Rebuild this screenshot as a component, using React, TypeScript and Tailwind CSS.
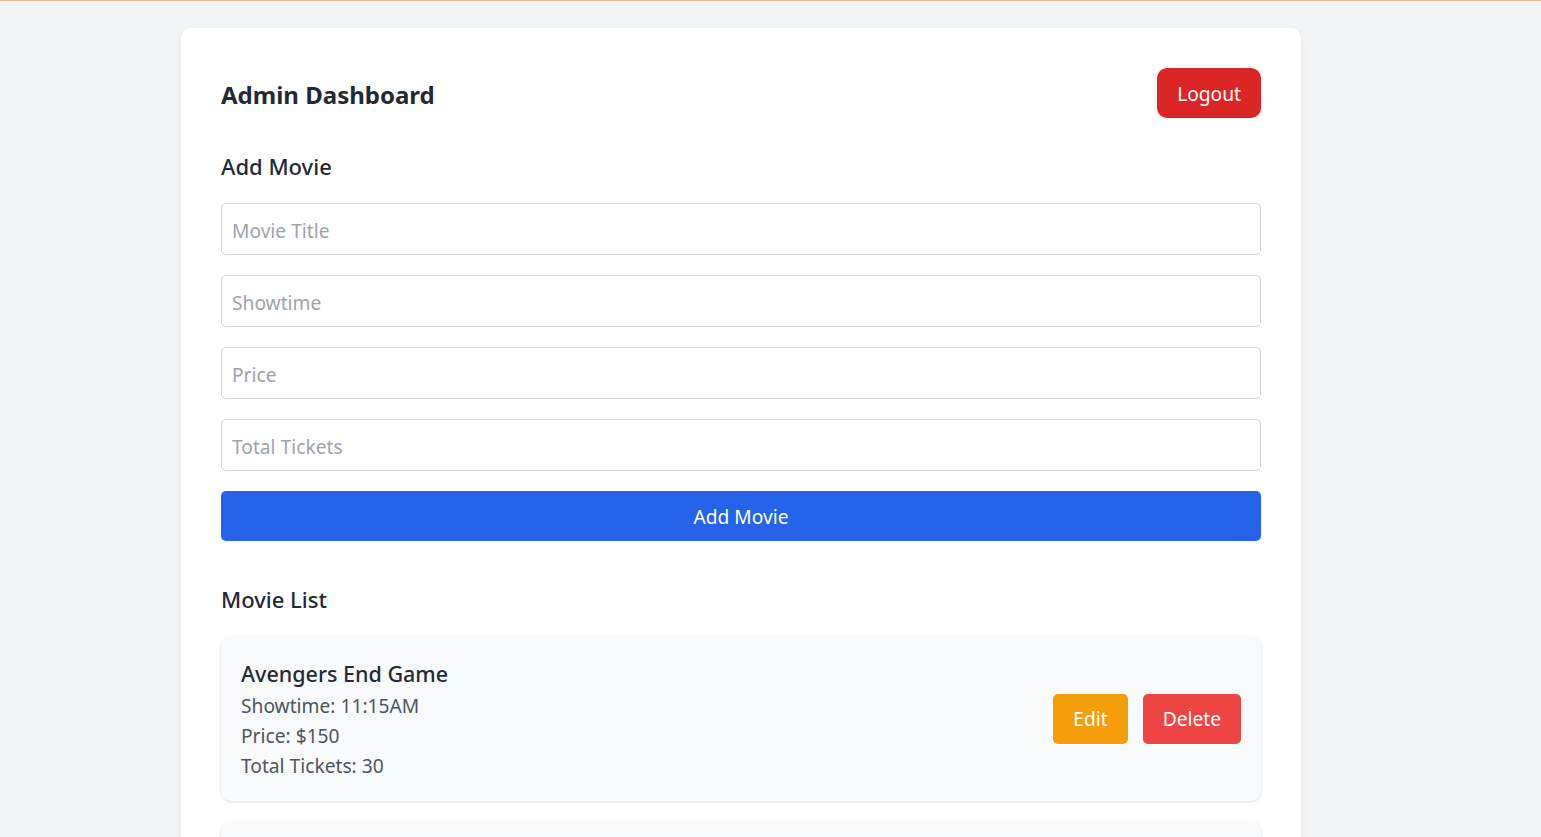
import { useState } from 'react'

type Movie = { title: string; showtime: string; price: string; total: string }

const MOVIES: Movie[] = [
  { title: 'Avengers End Game', showtime: '11:15AM', price: '150', total: '30' },
  { title: 'Inception', showtime: '02:30PM', price: '120', total: '40' },
]

const FIELDS = ['Movie Title', 'Showtime', 'Price', 'Total Tickets']

export default function App() {
  const [values, setValues] = useState<string[]>(['', '', '', ''])

  return (
    <div className="min-h-screen border-t border-[#d9b98f] bg-[#f3f4f6] pt-[27px] pb-10 font-['Segoe_UI','Noto_Sans',sans-serif]">
      <div className="ml-[181px] w-[1120px] rounded-[10px] bg-white p-10 shadow-[0_2px_6px_rgba(0,0,0,0.06)]">
        {/* Header */}
        <div className="mb-[30px] flex items-center justify-between">
          <h2 className="pt-[2px] text-[24px] font-bold leading-[35px] text-[#1f2937]">Admin Dashboard</h2>
          <button className="h-[50px] rounded-[10px] bg-[#dc2626] px-5 pt-[2px] text-[19.2px] text-white">Logout</button>
        </div>

        {/* Add movie form */}
        <h3 className="mb-5 pt-[1px] text-[22px] font-medium leading-[34px] text-[#1f2937]">Add Movie</h3>
        <div className="flex flex-col gap-5">
          {FIELDS.map((f, i) => (
            <input
              key={f}
              value={values[i]}
              onChange={e => setValues(v => v.map((x, j) => (j === i ? e.target.value : x)))}
              placeholder={f}
              className="h-[52px] w-full rounded-[5px] border border-[#d1d5db] px-[10px] pt-[2px] text-[19.2px] text-[#1f2937] outline-none placeholder:text-[#9ca3af]"
            />
          ))}
          <button className="h-[50px] w-full rounded-[5px] bg-[#2563eb] pt-[2px] text-[19.2px] text-white">Add Movie</button>
        </div>

        {/* Movie list */}
        <h3 className="mt-10 mb-5 pt-[1px] text-[22px] font-medium leading-[34px] text-[#1f2937]">Movie List</h3>
        <div className="flex flex-col gap-5">
          {MOVIES.map(m => (
            <div
              key={m.title}
              className="flex items-center justify-between rounded-[10px] bg-[#f9fafb] p-5 shadow-[0_1px_3px_rgba(0,0,0,0.12)]"
            >
              <div className="pt-[1px]">
                <p className="text-[21.5px] font-medium leading-[33px] text-[#1f2937]">{m.title}</p>
                <div className="pt-[1px]">
                  <p className="text-[19.2px] leading-[30px] text-[#4b5563]">Showtime: {m.showtime}</p>
                  <p className="text-[19.2px] leading-[30px] text-[#4b5563]">Price: ${m.price}</p>
                  <p className="text-[19.2px] leading-[30px] text-[#4b5563]">Total Tickets: {m.total}</p>
                </div>
              </div>
              <div className="flex gap-[15px]">
                <button className="h-[50px] rounded-[5px] bg-[#f59e0b] px-5 pt-[2px] text-[19.2px] text-white">Edit</button>
                <button className="h-[50px] rounded-[5px] bg-[#ef4444] px-5 pt-[2px] text-[19.2px] text-white">Delete</button>
              </div>
            </div>
          ))}
        </div>
      </div>
    </div>
  )
}
